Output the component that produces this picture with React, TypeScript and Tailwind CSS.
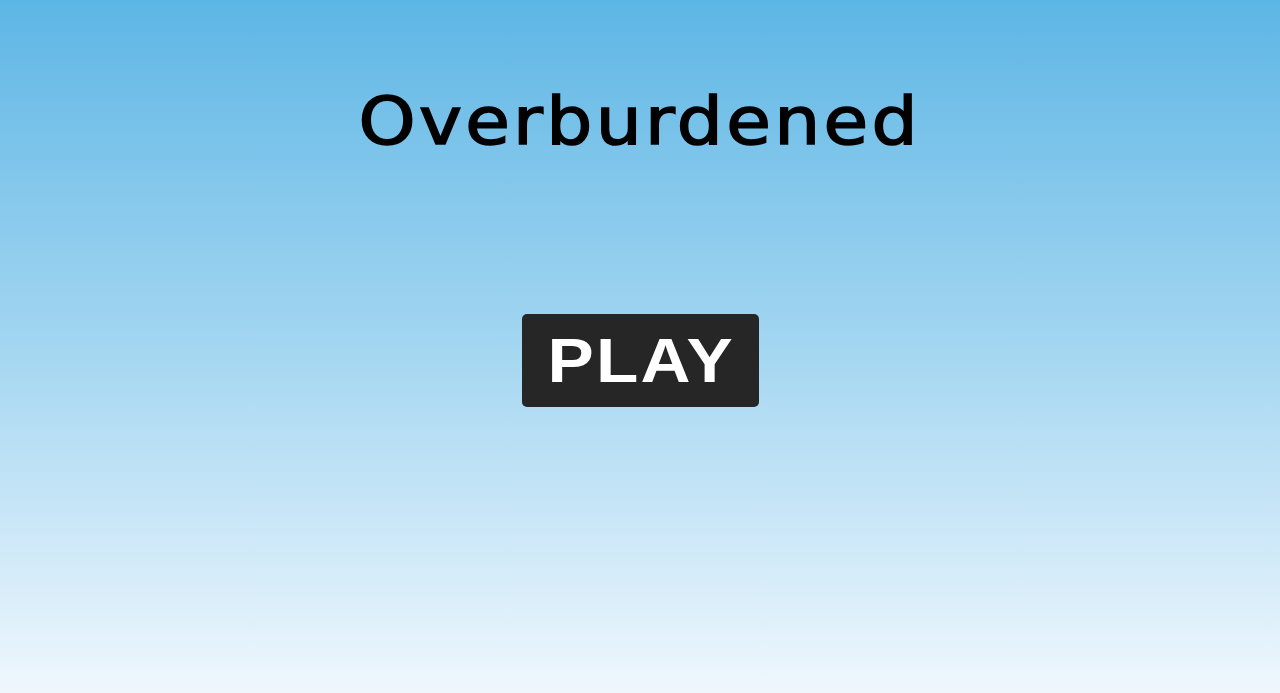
import React from "react";

export default function App() {
  return (
    <div className="w-[1280px] h-[693px] bg-gradient-to-b from-[#5cb6e5] via-[#a3d6f1] to-[#eff7fd] flex flex-col items-center overflow-hidden">
      <h1 className="mt-[89px] h-[68px] text-[66px] leading-none text-black font-normal tracking-[3px] font-['DejaVu_Sans',sans-serif] [-webkit-text-stroke:1.6px_black] scale-x-110">
        Overburdened
      </h1>
      <button className="mt-[157px] w-[237px] h-[93px] bg-[#262626] rounded-[5px] text-white flex items-center justify-center">
        <span className="text-[63px] font-bold leading-none tracking-[2px] pl-[2px] font-['Liberation_Sans',Arial,sans-serif] scale-x-110">
          PLAY
        </span>
      </button>
    </div>
  );
}
